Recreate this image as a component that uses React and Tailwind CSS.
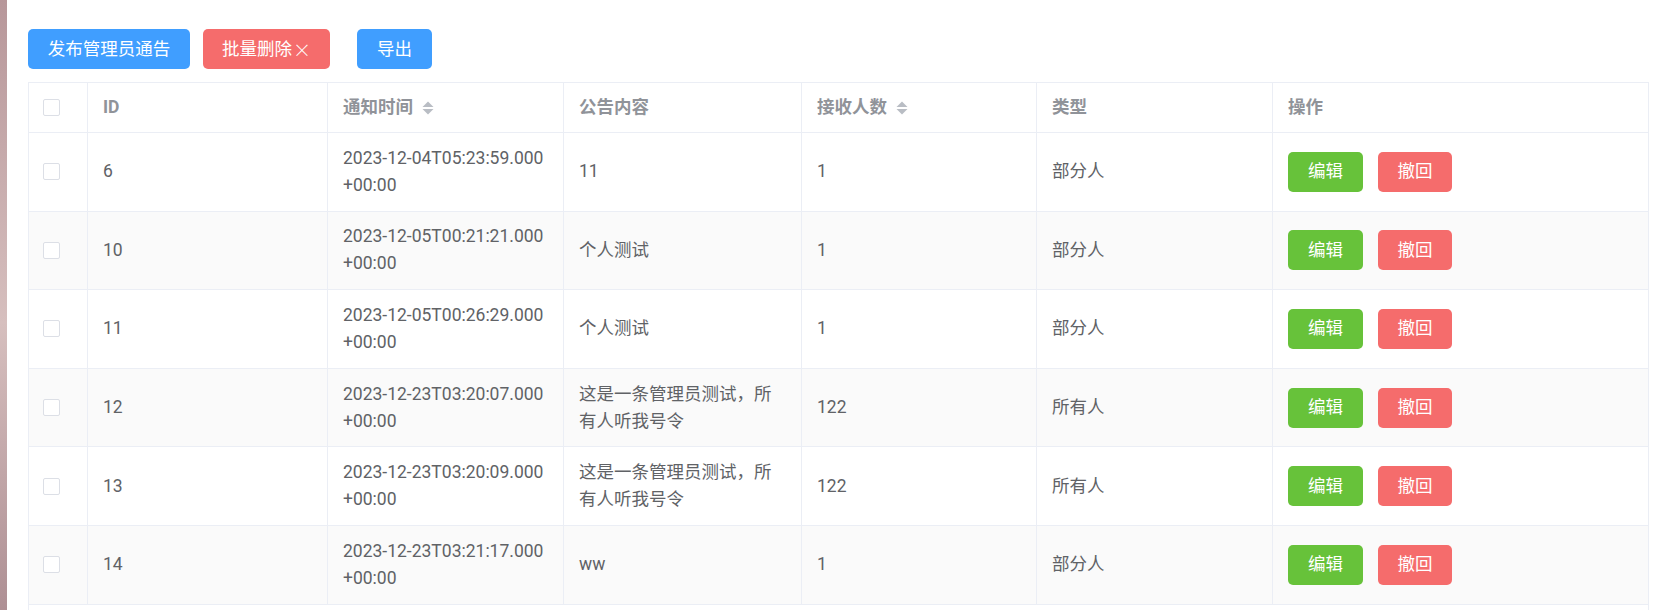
import React from "react";

const notices = [
  { id: 6, time: "2023-12-04T05:23:59.000", content: "11", count: 1, type: "部分人" },
  { id: 10, time: "2023-12-05T00:21:21.000", content: "个人测试", count: 1, type: "部分人" },
  { id: 11, time: "2023-12-05T00:26:29.000", content: "个人测试", count: 1, type: "部分人" },
  { id: 12, time: "2023-12-23T03:20:07.000", content: "这是一条管理员测试，所有人听我号令", count: 122, type: "所有人" },
  { id: 13, time: "2023-12-23T03:20:09.000", content: "这是一条管理员测试，所有人听我号令", count: 122, type: "所有人" },
  { id: 14, time: "2023-12-23T03:21:17.000", content: "ww", count: 1, type: "部分人" },
];

const SortCaret = () => (
  <svg width="12" height="14" viewBox="0 0 12 14" className="ml-[9px] shrink-0">
    <polygon points="0.5,6 6,0.5 11.5,6" fill="#b9bdc4" />
    <polygon points="0.5,8 6,13.5 11.5,8" fill="#b9bdc4" />
  </svg>
);

const Checkbox = () => (
  <span className="block w-[17px] h-[17px] rounded-[2px] border border-[#dcdfe6] bg-white" />
);

export default function App() {
  const th = "flex items-center border-r border-b border-[#ebeef5] py-[11px] px-[15px] leading-[27px] font-bold text-[#909399]";

  return (
    <div className="flex min-h-screen bg-white font-['Roboto','Noto_Sans_CJK_SC',sans-serif] text-[17.5px]">
      {/* blurred page background peeking in on the left */}
      <div className="w-[7px] shrink-0 bg-gradient-to-b from-[#b7979a] via-[#d6bfbe] to-[#a98a8f]" />

      <div className="flex-1 pl-[21px] pr-[16px] pt-[29px]">
        {/* Toolbar */}
        <div className="flex items-start">
          <button className="w-[162px] h-[40px] flex items-center justify-center rounded-[5px] bg-[#409eff] text-white">
            发布管理员通告
          </button>
          <button className="ml-[13px] w-[127px] h-[40px] flex items-center justify-center rounded-[5px] bg-[#f56c6c] text-white">
            批量删除<span className="ml-[1px] font-['Noto_Sans_CJK_SC',sans-serif] font-light text-[18px]">×</span>
          </button>
          <button className="ml-[27px] w-[75px] h-[40px] flex items-center justify-center rounded-[5px] bg-[#409eff] text-white">
            导出
          </button>
        </div>

        {/* Table */}
        <div className="mt-[13px] w-[1621px] border-l border-t border-[#ebeef5]">
          <div className="grid grid-cols-[59px_240px_236px_238px_235px_236px_376px]">
            <div className={`${th} pl-[14px]`}>
              <Checkbox />
            </div>
            <div className={th}>ID</div>
            <div className={th}>
              通知时间
              <SortCaret />
            </div>
            <div className={th}>公告内容</div>
            <div className={th}>
              接收人数
              <SortCaret />
            </div>
            <div className={th}>类型</div>
            <div className={th}>操作</div>

            {notices.map((n, i) => {
              const td = `flex items-center border-r border-b border-[#ebeef5] py-[11.8px] px-[15px] leading-[27px] text-[#606266] ${
                i % 2 === 1 ? "bg-[#fafafa]" : "bg-white"
              }`;
              return (
                <React.Fragment key={n.id}>
                  <div className={`${td} pl-[14px]`}>
                    <Checkbox />
                  </div>
                  <div className={td}>{n.id}</div>
                  <div className={td}>
                    <div>
                      <div>{n.time}</div>
                      <div>+00:00</div>
                    </div>
                  </div>
                  <div className={td}>{n.content}</div>
                  <div className={td}>{n.count}</div>
                  <div className={td}>{n.type}</div>
                  <div className={`${td} gap-[15px]`}>
                    <button className="w-[75px] h-[40px] flex items-center justify-center rounded-[5px] bg-[#67c23a] text-white">
                      编辑
                    </button>
                    <button className="w-[74px] h-[40px] flex items-center justify-center rounded-[5px] bg-[#f56c6c] text-white">
                      撤回
                    </button>
                  </div>
                </React.Fragment>
              );
            })}
          </div>
          <div className="h-[40px] border-r border-[#ebeef5]" />
        </div>
      </div>
    </div>
  );
}
